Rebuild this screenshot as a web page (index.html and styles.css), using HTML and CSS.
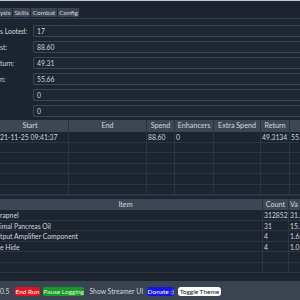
FILE: index.html
```html
<!DOCTYPE html>
<html>
<head>
<meta charset="utf-8">
<link rel="stylesheet" href="styles.css">
</head>
<body>
<div class="app">
  <div class="topline"></div>
  <div class="tabs">
    <div class="tab">ysis</div>
    <div class="tab">Skills</div>
    <div class="tab">Combat</div>
    <div class="tab">Config</div>
  </div>
  <div class="panel">
    <div class="form">
      <div class="row"><span class="label">s Looted:</span><div class="input">17</div></div>
      <div class="row"><span class="label">st:</span><div class="input">88.60</div></div>
      <div class="row"><span class="label">turn:</span><div class="input">49.31</div></div>
      <div class="row"><span class="label">n:</span><div class="input">55.66</div></div>
      <div class="row"><span class="label"></span><div class="input">0</div></div>
      <div class="row"><span class="label"></span><div class="input">0</div></div>
    </div>

    <div class="table runs">
      <div class="thead">
        <div class="th start">Start</div><div class="th">End</div><div class="th">Spend</div><div class="th">Enhancers</div><div class="th">Extra Spend</div><div class="th">Return</div><div class="th"></div>
      </div>
      <div class="tr"><div class="td">21-11-25 09:41:37</div><div class="td"></div><div class="td">88.60</div><div class="td">0</div><div class="td"></div><div class="td">49.3134</div><div class="td">55.</div></div>
      <div class="tr"><div class="td"></div><div class="td"></div><div class="td"></div><div class="td"></div><div class="td"></div><div class="td"></div><div class="td"></div></div>
      <div class="tr"><div class="td"></div><div class="td"></div><div class="td"></div><div class="td"></div><div class="td"></div><div class="td"></div><div class="td"></div></div>
      <div class="tr"><div class="td"></div><div class="td"></div><div class="td"></div><div class="td"></div><div class="td"></div><div class="td"></div><div class="td"></div></div>
      <div class="tr"><div class="td"></div><div class="td"></div><div class="td"></div><div class="td"></div><div class="td"></div><div class="td"></div><div class="td"></div></div>
      <div class="tr"><div class="td"></div><div class="td"></div><div class="td"></div><div class="td"></div><div class="td"></div><div class="td"></div><div class="td"></div></div>
    </div>

    <div class="table items">
      <div class="thead">
        <div class="th item">Item</div><div class="th">Count</div><div class="th">Va</div>
      </div>
      <div class="tr"><div class="td">rapnel</div><div class="td">312852</div><div class="td">31.2</div></div>
      <div class="tr"><div class="td">imal Pancreas Oil</div><div class="td">31</div><div class="td">15.5</div></div>
      <div class="tr"><div class="td">tput Amplifier Component</div><div class="td">4</div><div class="td">1.6</div></div>
      <div class="tr"><div class="td">e Hide</div><div class="td">4</div><div class="td">1.0</div></div>
      <div class="tr"><div class="td"></div><div class="td"></div><div class="td"></div></div>
      <div class="tr"><div class="td"></div><div class="td"></div><div class="td"></div></div>
    </div>
  </div>

  <div class="statusbar">
    <span class="ver">0.5</span>
    <span class="btn red">End Run</span>
    <span class="btn green">Pause Logging</span>
    <span class="plain">Show Streamer UI</span>
    <span class="btn blue">Donate :)</span>
    <span class="btn white">Toggle Theme</span>
  </div>
</div>
</body>
</html>
```

FILE: styles.css
```css
html, body {
  margin: 0;
  padding: 0;
  background: #1c2430;
  overflow: hidden;
}
body {
  width: 300px;
  height: 300px;
  font-family: "Lato", "Open Sans", sans-serif;
  font-size: 6.8px;
  color: #d2d6da;
}
.app {
  display: flex;
  flex-direction: column;
  height: 300px;
  overflow: hidden;
}
.topline {
  height: 1px;
  background: #c5c9ce;
}
.tabs {
  display: flex;
  gap: 1px;
  padding-top: 7px;
  height: 10px;
  font-size: 6.5px;
}
.tab {
  height: 9px;
  line-height: 9px;
  padding: 0 1.5px;
  background: #3a4350;
  white-space: nowrap;
}
.tab:first-child {
  padding-left: 0;
}
.panel {
  border-top: 1px solid #36404c;
  flex: 1;
  display: flex;
  flex-direction: column;
  min-height: 0;
  overflow: hidden;
}
.form {
  display: flex;
  flex-direction: column;
  gap: 4px;
  padding-top: 6px;
}
.row {
  display: grid;
  grid-template-columns: 33px 267px;
  align-items: center;
  height: 12px;
}
.label {
  white-space: nowrap;
}
.input {
  box-sizing: border-box;
  height: 12px;
  line-height: 10px;
  border: 1px solid #3c4653;
  border-right: none;
  border-radius: 2px 0 0 2px;
  padding-left: 3px;
  background: #1d2632;
}
.table {
  display: flex;
  flex-direction: column;
  width: 300px;
}
.runs {
  margin-top: 3px;
}
.thead, .tr {
  display: grid;
}
.runs .thead, .runs .tr {
  grid-template-columns: 69px 78px 28px 39px 47px 29px 10px;
}
.items .thead, .items .tr {
  grid-template-columns: 263px 26px 11px;
}
.thead {
  background: #3c4756;
  height: 12px;
  font-size: 7.2px;
}
.items .thead {
  height: 11px;
}
.th {
  text-align: center;
  line-height: 12px;
  border-right: 1px solid #2a323d;
  white-space: nowrap;
  overflow: hidden;
}
.items .th {
  line-height: 11px;
}
.th:last-child, .td:last-child {
  border-right: none;
  text-align: left;
  padding-left: 1px;
}
.runs .start {
  padding-right: 8px;
}
.items .item {
  padding-right: 11px;
}
.tr {
  height: 10.5px;
  box-sizing: border-box;
  border-bottom: 1px solid #2c3542;
}
.td {
  line-height: 10px;
  padding-left: 1px;
  border-right: 1px solid #2c3542;
  white-space: nowrap;
  overflow: hidden;
}
.td:first-child {
  padding-left: 0;
}
.items {
  border-top: 1px solid #2c3542;
  padding-top: 3px;
}
.statusbar {
  flex: none;
  height: 19px;
  background: #3a4350;
  display: flex;
  align-items: center;
  padding-top: 1px;
  box-sizing: border-box;
  white-space: nowrap;
  font-size: 6.8px;
}
.ver {
  width: 15px;
}
.btn {
  height: 9px;
  line-height: 9px;
  padding: 0 0.5px;
  border-radius: 2px;
  font-size: 6.5px;
}
.red { background: #e0141e; color: #fff; margin-right: 3px; }
.green { background: #179a25; color: #e8f0e8; margin-right: 5px; }
.plain { margin-right: 4px; }
.blue { background: #1515e6; color: #fff; margin-right: 4px; }
.white { background: #fff; color: #111; border-radius: 3px; padding: 0 1.5px; }
```
